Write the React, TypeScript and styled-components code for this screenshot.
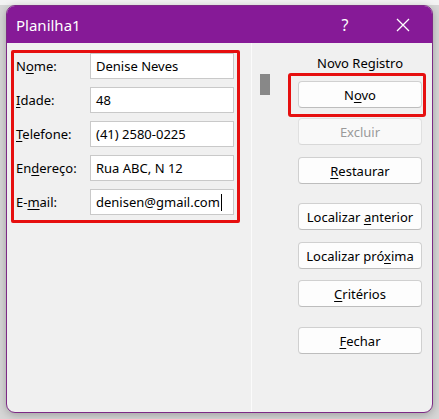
import styled, { createGlobalStyle } from "styled-components";

const GlobalStyle = createGlobalStyle`
html, body {
    margin:0;
    padding:0;
    background:#dcdcdc;
    font-family:"Noto Sans", "Open Sans", sans-serif;
}
`

const Screen = styled.div`
width:439px;
height:419px;
overflow:hidden;
background:linear-gradient(to bottom, #f3f3f3 0px, #f3f3f3 5px, #d6d6d6 5px);
padding:5px 0 0 6px;
box-sizing:border-box;
`
const Dialog = styled.div`
width:427px;
height:408px;
box-sizing:border-box;
display:flex;
flex-direction:column;
background:#f0f0f0;
border:1px solid #7d2a86;
border-radius:9px;
overflow:hidden;
box-shadow:0 2px 8px rgba(0,0,0,0.25);
`
const TitleBar = styled.div`
height:37px;
flex-shrink:0;
background:#861a97;
color:#fff;
display:flex;
align-items:center;
padding:0 0 0 9px;
font-size:15px;
`
const TitleText = styled.span`
flex:1;
`
const TitleButton = styled.span`
width:58px;
display:flex;
align-items:center;
justify-content:center;
font-size:16px;
`
const Body = styled.div`
flex:1;
display:flex;
`
const LeftPane = styled.div`
width:245px;
border-right:1px solid #fbfbfb;
padding:7px 0 0 4px;
box-sizing:border-box;
`
const RedFrame = styled.div`
width:229px;
border:3px solid #e60f0f;
border-radius:2px;
box-sizing:border-box;
padding:0 2px 5px 2px;
display:flex;
flex-direction:column;
gap:8px;
`
const FieldRow = styled.div`
display:flex;
align-items:center;
height:26px;
`
const Label = styled.label`
width:74px;
font-size:13px;
color:#000;
`
const Input = styled.div`
width:144px;
height:26px;
box-sizing:border-box;
background:#fff;
border:1px solid #c9c9c9;
font-size:13px;
padding:0 5px;
display:flex;
align-items:center;
color:#000;
`
const Caret = styled.span`
display:inline-block;
width:1px;
height:17px;
background:#000;
margin-left:1px;
`
const U = styled.span`
text-decoration:underline;
text-underline-offset:2px;
`
const RightPane = styled.div`
flex:1;
display:flex;
`
const ScrollTrack = styled.div`
width:46px;
padding:31px 0 0 8px;
box-sizing:border-box;
`
const ScrollThumb = styled.div`
width:10px;
height:21px;
background:#888;
`
const ButtonColumn = styled.div`
width:124px;
display:flex;
flex-direction:column;
`
const Heading = styled.div`
text-align:center;
font-size:13px;
color:#000;
margin-top:10px;
height:20px;
line-height:20px;
`
const Highlight = styled.div`
position:relative;
margin-top:8px;
`
const HighlightBox = styled.div`
position:absolute;
left:-10px;
right:-4px;
top:-8px;
bottom:-9px;
border:3px solid #e60f0f;
border-radius:3px;
pointer-events:none;
`
interface ButtonProps {
    $top?: number
    $disabled?: boolean
}
const Button = styled.div<ButtonProps>`
height:27px;
box-sizing:border-box;
margin-top:${props => props.$top ?? 0}px;
background:${props => props.$disabled ? "#f9f9f9" : "#fdfdfd"};
border:1px solid ${props => props.$disabled ? "#e0e0e0" : "#d0d0d0"};
border-bottom-color:${props => props.$disabled ? "#d8d8d8" : "#bdbdbd"};
border-radius:4px;
display:flex;
align-items:center;
justify-content:center;
font-size:13px;
color:${props => props.$disabled ? "#9a9a9a" : "#000"};
`

const fields = [
    { label: <>N<U>o</U>me:</>, value: "Denise Neves" },
    { label: <><U>I</U>dade:</>, value: "48" },
    { label: <><U>T</U>elefone:</>, value: "(41) 2580-0225" },
    { label: <>En<U>d</U>ereço:</>, value: "Rua ABC, N 12" },
    { label: <>E-<U>m</U>ail:</>, value: "denisen@gmail.com", caret: true },
]

const App = () => {
    return (
        <>
            <GlobalStyle />
            <Screen>
                <Dialog>
                    <TitleBar>
                        <TitleText>Planilha1</TitleText>
                        <TitleButton>?</TitleButton>
                        <TitleButton>
                            <svg width="14" height="14" viewBox="0 0 14 14">
                                <path d="M1 1 L13 13 M13 1 L1 13" stroke="#fff" strokeWidth="1.3" />
                            </svg>
                        </TitleButton>
                    </TitleBar>
                    <Body>
                        <LeftPane>
                            <RedFrame>
                                {fields.map((f, i) => (
                                    <FieldRow key={i}>
                                        <Label>{f.label}</Label>
                                        <Input><span>{f.value}</span>{f.caret ? <Caret /> : null}</Input>
                                    </FieldRow>
                                ))}
                            </RedFrame>
                        </LeftPane>
                        <RightPane>
                            <ScrollTrack>
                                <ScrollThumb />
                            </ScrollTrack>
                            <ButtonColumn>
                                <Heading>Novo Registro</Heading>
                                <Highlight>
                                    <HighlightBox />
                                    <Button><span>N<U>o</U>vo</span></Button>
                                </Highlight>
                                <Button $top={10} $disabled><span>Excluir</span></Button>
                                <Button $top={12}><span><U>R</U>estaurar</span></Button>
                                <Button $top={19}><span>Localizar <U>a</U>nterior</span></Button>
                                <Button $top={12}><span>Localizar pró<U>x</U>ima</span></Button>
                                <Button $top={11}><span><U>C</U>ritérios</span></Button>
                                <Button $top={20}><span><U>F</U>echar</span></Button>
                            </ButtonColumn>
                        </RightPane>
                    </Body>
                </Dialog>
            </Screen>
        </>
    )
}
export default App;
